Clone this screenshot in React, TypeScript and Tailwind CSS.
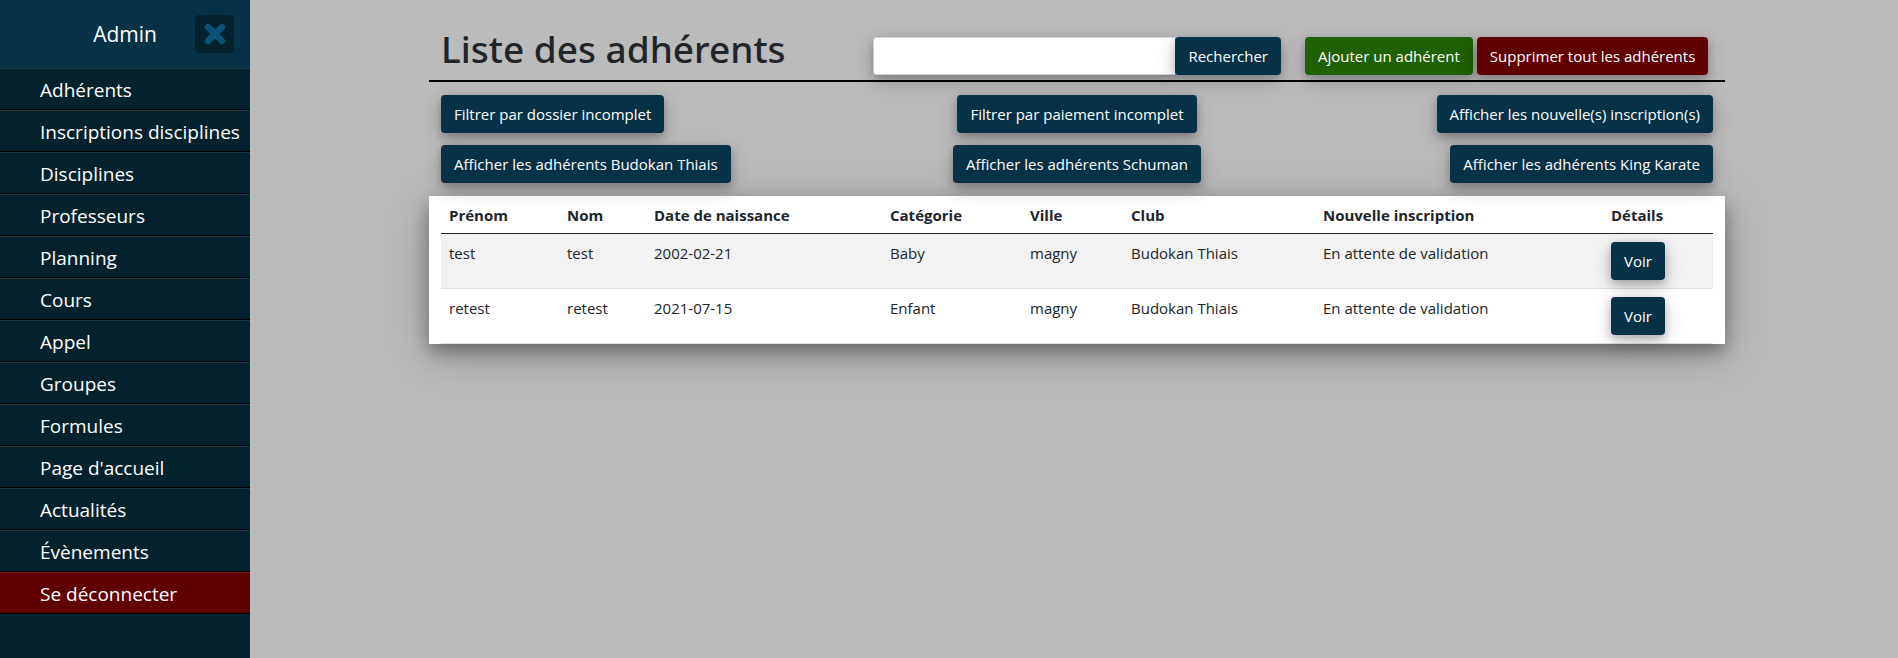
const menu = [
  "Adhérents",
  "Inscriptions disciplines",
  "Disciplines",
  "Professeurs",
  "Planning",
  "Cours",
  "Appel",
  "Groupes",
  "Formules",
  "Page d'accueil",
  "Actualités",
  "Évènements",
];

const filters = [
  "Filtrer par dossier incomplet",
  "Filtrer par paiement incomplet",
  "Afficher les nouvelle(s) inscription(s)",
  "Afficher les adhérents Budokan Thiais",
  "Afficher les adhérents Schuman",
  "Afficher les adhérents King Karate",
];

const filterAlign = ["justify-self-start", "justify-self-center", "justify-self-end"];

const columns = [
  { label: "Prénom", width: "w-[118px]" },
  { label: "Nom", width: "w-[87px]" },
  { label: "Date de naissance", width: "w-[236px]" },
  { label: "Catégorie", width: "w-[140px]" },
  { label: "Ville", width: "w-[101px]" },
  { label: "Club", width: "w-[192px]" },
  { label: "Nouvelle inscription", width: "w-[288px]" },
  { label: "Détails", width: "w-[110px]" },
];

const members = [
  ["test", "test", "2002-02-21", "Baby", "magny", "Budokan Thiais", "En attente de validation"],
  ["retest", "retest", "2021-07-15", "Enfant", "magny", "Budokan Thiais", "En attente de validation"],
];

const tones = {
  blue: "bg-[#073147]",
  green: "bg-[#1f6000]",
  red: "bg-[#600000]",
};

function Button({ label, tone = "blue", className = "" }: { label: string; tone?: keyof typeof tones; className?: string }) {
  return (
    <button
      type="button"
      className={`h-[38px] shrink-0 cursor-pointer whitespace-nowrap rounded px-[13px] text-[15px] leading-6 text-white shadow-[0_4px_8px_rgba(0,0,0,0.2),0_6px_20px_rgba(0,0,0,0.19)] ${tones[tone]} ${className}`}
    >
      {label}
    </button>
  );
}

function CloseIcon() {
  return (
    <svg viewBox="0 0 22 22" className="size-[22px]" fill="none" stroke="currentColor" strokeWidth="6.4" strokeLinecap="round" aria-hidden="true">
      <path d="M4 4 L18 18 M18 4 L4 18" />
    </svg>
  );
}

function Sidebar() {
  return (
    <aside className="w-[250px] shrink-0 bg-[#03222e] text-white">
      <div className="grid h-[68px] grid-cols-[1fr_auto_1fr] items-center bg-[#073147] px-4">
        <span className="col-start-2 pt-0.5 text-[21px]">Admin</span>
        <button
          type="button"
          aria-label="Fermer le menu"
          className="flex h-[38px] w-[39px] cursor-pointer items-center justify-center justify-self-end rounded bg-[#03222e] text-[#0a5378]"
        >
          <CloseIcon />
        </button>
      </div>
      <nav>
        {menu.map((item) => (
          <a
            key={item}
            href="#"
            className="block h-[42px] whitespace-nowrap border-t border-b border-t-[#1c3843] border-b-black pl-10 text-[19px] leading-[42px]"
          >
            {item}
          </a>
        ))}
        <a
          href="#"
          className="block h-[42px] whitespace-nowrap border-t border-b border-t-[#801a1a] border-b-black bg-[#600000] pl-10 text-[19px] leading-[42px]"
        >
          Se déconnecter
        </a>
      </nav>
    </aside>
  );
}

function MemberTable() {
  return (
    <div className="bg-white px-3 shadow-[0_8px_16px_rgba(0,0,0,0.3),0_10px_40px_rgba(0,0,0,0.25)]">
      <table className="w-full table-fixed border-separate border-spacing-0 text-left text-[15px] leading-6">
        <thead>
          <tr>
            {columns.map((c) => (
              <th key={c.label} scope="col" className={`h-[38px] whitespace-nowrap border-b border-[#212529] px-2 py-0 font-bold ${c.width}`}>
                {c.label}
              </th>
            ))}
          </tr>
        </thead>
        <tbody>
          {members.map((row) => (
            <tr key={row[0]} className="odd:bg-[#f2f2f2]">
              {row.map((cell, i) => (
                <td key={i} className="whitespace-nowrap border-b border-[#dee2e6] px-2 pt-[7px] align-top">
                  {cell}
                </td>
              ))}
              <td className="border-b border-[#dee2e6] px-2 py-2 align-top">
                <Button label="Voir" className="block" />
              </td>
            </tr>
          ))}
        </tbody>
      </table>
    </div>
  );
}

export default function App() {
  return (
    <div className="flex min-h-screen bg-[#bbbbbb] font-['Open_Sans','Noto_Sans',sans-serif] text-[#212529]">
      <Sidebar />
      <main className="flex min-w-0 flex-1 justify-center pl-1.5">
        <div className="w-full max-w-[1296px]">
          <header className="grid grid-cols-3 border-b-2 border-black pt-6">
            <h1 className="whitespace-nowrap px-3 font-['Noto_Sans','Open_Sans',sans-serif] text-[37px] leading-[50px] font-medium">
              Liste des adhérents
            </h1>
            <form className="flex px-3 pt-[13px] pb-[5px]">
              <input
                type="search"
                aria-label="Rechercher un adhérent"
                className="h-[38px] min-w-0 flex-1 rounded-l border border-r-0 border-[#ced4da] bg-white px-3 text-[15px] shadow-[0_4px_8px_rgba(0,0,0,0.2),0_6px_20px_rgba(0,0,0,0.19)] outline-none"
              />
              <Button label="Rechercher" />
            </form>
            <div className="flex gap-1 px-3 pt-[13px] pb-[5px]">
              <Button label="Ajouter un adhérent" tone="green" />
              <Button label="Supprimer tout les adhérents" tone="red" />
            </div>
          </header>
          <div className="relative z-10 grid grid-cols-3 gap-y-3 px-3 py-[13px]">
            {filters.map((label, i) => (
              <Button key={label} label={label} className={filterAlign[i % 3]} />
            ))}
          </div>
          <MemberTable />
        </div>
      </main>
    </div>
  );
}
